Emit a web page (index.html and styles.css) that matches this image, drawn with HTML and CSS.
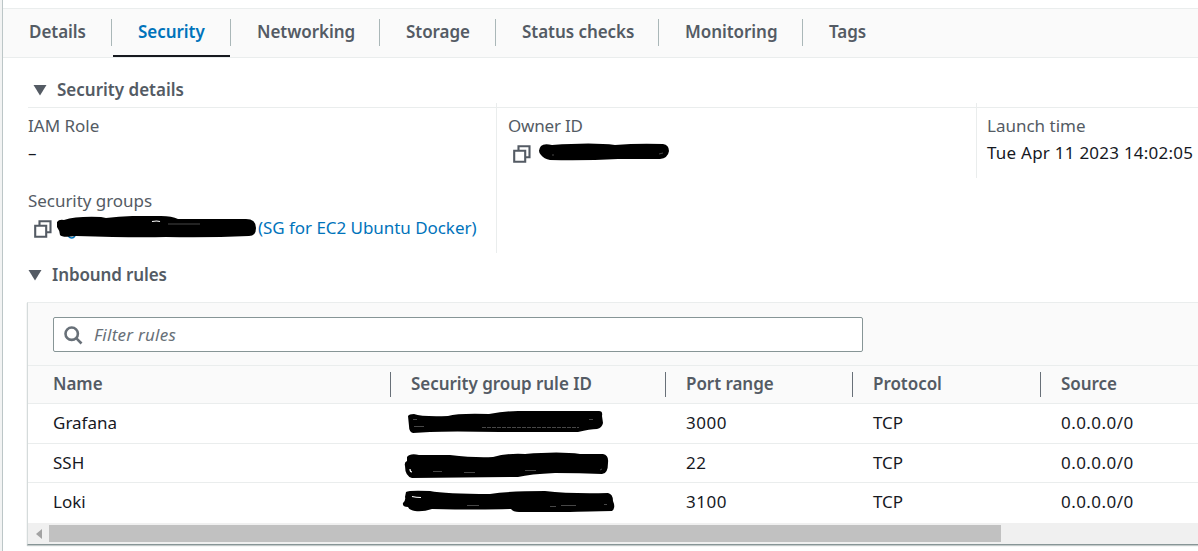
FILE: index.html
```html
<!DOCTYPE html>
<html lang="en">
<head>
<meta charset="utf-8">
<title>Instance security</title>
<link rel="stylesheet" href="styles.css">
</head>
<body>
<main class="panel">
  <nav class="tabs">
    <a class="tab">Details</a>
    <a class="tab tab-active">Security</a>
    <a class="tab">Networking</a>
    <a class="tab">Storage</a>
    <a class="tab">Status checks</a>
    <a class="tab">Monitoring</a>
    <a class="tab">Tags</a>
  </nav>

  <section class="details">
    <h2 class="heading heading-details">
      <svg class="caret" width="14" height="12" viewBox="0 0 14 12"><path d="M.5 1h13L7 11.500z"/></svg>
      Security details
    </h2>
    <div class="columns">
      <div class="column">
        <div class="label">IAM Role</div>
        <div class="value dash">–</div>
        <div class="label label-next">Security groups</div>
        <div class="value">
          <svg class="copy" width="18" height="18" viewBox="0 0 18 18"><path d="M1.200 5.700h11v11h-11zM5.500 5.500V1.200h11v11h-4"/></svg>
          <svg class="scribble" width="201" height="24" viewBox="1 0 201 24"><path class="link-dot" d="M12 20q4 4 7 0"/><path d="M1 6Q3 3 8 4Q20 0 45 1L50 2Q75-1 105 0Q116 0 122 3L190 3Q200 3 200 12Q200 20 193 20Q150 22 110 21Q80 22 20 20Q6 22 4 19Q4 15 1 11Q-1 8 1 6Z"/><path class="glint" d="M112 8h32"/><path class="glint glint-strong" d="M96 5.500q5-1 8 0"/></svg>
          <a class="link">(SG for EC2 Ubuntu Docker)</a>
        </div>
      </div>
      <div class="column">
        <div class="label label-owner">Owner ID</div>
        <div class="value value-owner">
          <svg class="copy" width="18" height="18" viewBox="0 0 18 18"><path d="M1.200 5.700h11v11h-11zM5.500 5.500V1.200h11v11h-4"/></svg>
          <svg class="scribble scribble-owner" width="132" height="18" viewBox="0 0 132 18"><path d="M3 3Q6 0 14 2Q55-1 77 2Q100 0 125 1Q131 2 131 8Q130 15 122 16L80 16Q45 18 12 17Q6 16 3 12Q-1 8 3 3Z"/><path class="glint" d="M14 12h2M121 11l4-1"/></svg>
        </div>
      </div>
      <div class="column column-last">
        <div class="label">Launch time</div>
        <div class="value time">Tue Apr 11 2023 14:02:05</div>
      </div>
    </div>
  </section>

  <section class="inbound">
    <h2 class="heading heading-inbound">
      <svg class="caret" width="14" height="12" viewBox="0 0 14 12"><path d="M.5 1h13L7 11.500z"/></svg>
      Inbound rules
    </h2>
    <div class="card">
      <div class="filter">
        <div class="search">
          <svg class="magnifier" width="19" height="19" viewBox="0 0 19 19"><circle cx="7.700" cy="7.700" r="6.200"/><path d="M12.200 12.200l5.300 5.300"/></svg>
          <span>Filter rules</span>
        </div>
      </div>
      <div class="row row-head">
        <div class="cell">Name</div>
        <div class="cell">Security group rule ID</div>
        <div class="cell">Port range</div>
        <div class="cell">Protocol</div>
        <div class="cell">Source</div>
      </div>
      <div class="row">
        <div class="cell">Grafana</div>
        <div class="cell cell-id"><svg width="214" height="26" viewBox="402 410 214 26"><path d="M408 416Q409 414 414 414Q422 417 448 416Q458 413 489 414Q505 411 518 411L599 411Q603 411 602 416L603 423Q602 428 597 429Q590 429 578 432L500 432Q450 431 430 432L413 433Q409 432 409 426Z"/><path class="glint" d="M413 419.500h4M414 426.500h10M589 419.500h4"/><path class="glint" stroke-dasharray="4 1" d="M482 427.500h97"/></svg></div>
        <div class="cell num">3000</div>
        <div class="cell">TCP</div>
        <div class="cell ip">0.0.0.0/0</div>
      </div>
      <div class="row row-middle">
        <div class="cell">SSH</div>
        <div class="cell cell-id"><svg width="214" height="26" viewBox="402 450 214 26"><path d="M407 457Q410 453 419 455L450 455Q475 458 493 457Q507 453 525 454Q560 451 580 454L603 454Q609 455 608 463Q608 474 602 474Q580 473 555 473Q530 474 518 477L412 478Q405 476 405 466Q404 462 407 461Z"/><path class="glint glint-strong" d="M410 469q0 3 2 3"/><path class="glint" d="M433 471.500h9M464 472.500h11M525 470.500h11M600 470l2-1"/></svg></div>
        <div class="cell num">22</div>
        <div class="cell">TCP</div>
        <div class="cell ip">0.0.0.0/0</div>
      </div>
      <div class="row row-end">
        <div class="cell">Loki</div>
        <div class="cell cell-id"><svg width="214" height="26" viewBox="402 489 214 26"><path d="M406 492Q409 490 430 491Q445 494 490 494Q510 491 545 491Q570 494 608 493Q613 494 613 501Q616 508 612 511Q600 511 570 512L519 512Q513 512 511 509Q480 510 432 509Q423 512 415 511Q409 510 408 507Q402 507 403 503Q406 500 405 497Z"/><path class="glint" d="M467 505.500h12M550 506.500h6M561 505.500h15M604 504.500h3"/><path class="glint glint-strong" d="M412 496.500q4 1 9 1"/></svg></div>
        <div class="cell num">3100</div>
        <div class="cell">TCP</div>
        <div class="cell ip">0.0.0.0/0</div>
      </div>
      <div class="scrollbar">
        <svg class="scroll-arrow" width="6" height="10" viewBox="0 0 6 10"><path d="M6 0v10L0 5z"/></svg>
        <div class="thumb"></div>
      </div>
    </div>
  </section>
</main>
</body>
</html>
```
FILE: styles.css
```css
* { box-sizing: border-box; }

body {
  margin: 0;
  height: 551px;
  overflow: hidden;
  background: #f2f3f3;
  color: #16191f;
  font: 400 17px/27px "Noto Sans", "Open Sans", sans-serif;
}

.panel {
  height: 551px;
  margin-left: 2px;
  padding-top: 8px;
  border-left: 1px solid #bcc6c7;
  background: #fff;
}

.tabs {
  display: grid;
  grid-template-columns: 109px 119px 149px 116px 163px 144px 1fr;
  height: 50px;
  border-top: 1px solid #eaeded;
  border-bottom: 1px solid #eaeded;
  background: #fafafa;
}

.tab {
  display: flex;
  padding: 9px 0 0 26px;
  color: #545b64;
  font-weight: 600;
  letter-spacing: -0.05px;
  white-space: nowrap;
}

.tab:not(:last-child)::after {
  content: "";
  width: 1px;
  height: 27px;
  margin: 1px 0 0 auto;
  background: #aab7b8;
}

.tab-active {
  color: #0073bb;
  background: linear-gradient(#16191f, #16191f) 1px 46px / 117px 2px no-repeat;
}

.heading {
  display: flex;
  align-items: center;
  margin: 0;
  color: #545b64;
  font-size: 17px;
  font-weight: 600;
}

.caret { fill: #545b64; }

.details { padding-left: 25px; }

.heading-details {
  height: 50px;
  padding: 13px 0 0 5px;
  gap: 10px;
  border-bottom: 1px solid #eaeded;
}

.heading-details .caret { margin-top: 2px; }

.columns {
  display: grid;
  grid-template-columns: 468px 480px 1fr;
  align-items: start;
  margin-top: -5px;
}

.column {
  height: 150px;
  padding: 9px 0 0;
  white-space: nowrap;
}

.column + .column {
  padding-left: 11px;
  border-left: 1px solid #eaeded;
}

.column.column-last {
  height: 75px;
  padding-left: 10px;
}

.label { color: #545b64; }
.label-next { margin-top: 21px; letter-spacing: -0.05px; }
.label-owner { letter-spacing: -0.2px; }

.value {
  display: flex;
  align-items: center;
  height: 27px;
}

.dash { color: #16191f; }
.time { letter-spacing: 0.24px; }

.copy {
  flex: none;
  margin: 2px 5px 0 6px;
  fill: none;
  stroke: #545b64;
  stroke-width: 2.1;
}

.value-owner .copy { margin-left: 5px; }

.scribble { flex: none; }
.scribble-owner { margin: -2px 0 0 2px; }

.link {
  color: #0073bb;
  letter-spacing: -0.05px;
}

.link-dot {
  fill: none;
  stroke: #0073bb;
  stroke-width: 1.5;
}

.glint {
  fill: none;
  stroke: #777;
  stroke-width: 0.6;
}

.glint-strong {
  stroke: #fff;
  stroke-width: 1.2;
}

.inbound { padding-left: 24px; }

.heading-inbound {
  height: 49px;
  padding: 0 0 7px 1px;
  gap: 10px;
  letter-spacing: -0.12px;
}

.heading-inbound .caret { margin-top: 2px; }

.card {
  border: 1px solid #eaeded;
  border-left-color: #d5dbdb;
  border-right: 0;
  border-bottom-color: #879596;
  box-shadow: 0 1px 1px #c3caca;
}

.filter {
  height: 63px;
  padding: 14px 0 0 25px;
  border-bottom: 1px solid #eaeded;
  background: #fafafa;
}

.search {
  display: flex;
  align-items: center;
  gap: 11px;
  width: 810px;
  height: 35px;
  padding-left: 10px;
  border: 1px solid #879596;
  border-radius: 2px;
  background: #fff;
  color: #687078;
  font-style: italic;
  letter-spacing: 0.25px;
}

.magnifier {
  margin-top: 1px;
  fill: none;
  stroke: #687078;
  stroke-width: 2.6;
}

.row {
  display: grid;
  grid-template-columns: 363px 275px 187px 188px 1fr;
  height: 40px;
  border-bottom: 1px solid #eaeded;
}

.row-middle { height: 39px; }
.row-end { border-bottom: 0; }

.row-head {
  height: 38px;
  background: #fafafa;
  color: #545b64;
  font-weight: 600;
}

.cell {
  display: flex;
  align-items: center;
  padding: 0 0 2px 25px;
  white-space: nowrap;
}

.row-middle .cell { padding-bottom: 1px; }
.row-end .cell { padding-bottom: 3px; }

.cell + .cell { padding-left: 20px; }

.row-head .cell { letter-spacing: -0.04px; }

.row-head .cell:not(:last-child)::after {
  content: "";
  width: 1px;
  height: 25px;
  margin: 2px 0 0 auto;
  background: #687078;
}

.row .cell-id {
  align-items: flex-start;
  padding: 6px 0 0 11px;
}

.cell-id svg { overflow: visible; }

.num { letter-spacing: 0.5px; }
.ip { letter-spacing: 0.45px; }

.scrollbar {
  display: flex;
  align-items: center;
  height: 21px;
  padding-left: 8px;
  gap: 7px;
  background: #f0f0f0;
}

.scroll-arrow { fill: #a3a3a3; }

.thumb {
  width: 952px;
  height: 17px;
  background: #c1c1c1;
}
```
